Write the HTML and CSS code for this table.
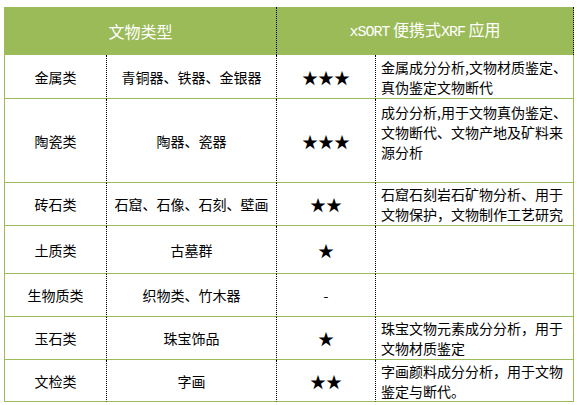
FILE: index.html
```html
<!DOCTYPE html>
<html lang="zh-CN">
<head>
<meta charset="utf-8">
<title>文物类型与 xSORT 便携式 XRF 应用</title>
<link rel="stylesheet" href="styles.css">
</head>
<body>
<div class="grid">
  <div class="hd hd-a"><span>文物类型</span></div>
  <div class="hd hd-b"><span><span class="lat">xSORT</span> 便携式<span class="lat">XRF</span> 应用</span></div>

  <div class="c c1 r1">金属类</div>
  <div class="c c2 r1">青铜器、铁器、金银器</div>
  <div class="c c3 r1 stars">★★★</div>
  <div class="c c4 r1 desc"><span>金属成分分析,文物材质鉴定、<br>真伪鉴定文物断代</span></div>

  <div class="c c1 r2">陶瓷类</div>
  <div class="c c2 r2">陶器、瓷器</div>
  <div class="c c3 r2 stars">★★★</div>
  <div class="c c4 r2 desc top"><span>成分分析,用于文物真伪鉴定、<br>文物断代、文物产地及矿料来<br>源分析</span></div>

  <div class="c c1 r3">砖石类</div>
  <div class="c c2 r3">石窟、石像、石刻、壁画</div>
  <div class="c c3 r3 stars">★★</div>
  <div class="c c4 r3 desc"><span>石窟石刻岩石矿物分析、用于<br>文物保护，文物制作工艺研究</span></div>

  <div class="c c1 r4">土质类</div>
  <div class="c c2 r4">古墓群</div>
  <div class="c c3 r4 stars">★</div>
  <div class="c c4 r4 desc"></div>

  <div class="c c1 r5">生物质类</div>
  <div class="c c2 r5">织物类、竹木器</div>
  <div class="c c3 r5 dash">-</div>
  <div class="c c4 r5 desc"></div>

  <div class="c c1 r6">玉石类</div>
  <div class="c c2 r6">珠宝饰品</div>
  <div class="c c3 r6 stars">★</div>
  <div class="c c4 r6 desc"><span>珠宝文物元素成分分析，用于<br>文物材质鉴定</span></div>

  <div class="c c1 r7">文检类</div>
  <div class="c c2 r7">字画</div>
  <div class="c c3 r7 stars">★★</div>
  <div class="c c4 r7 desc"><span>字画颜料成分分析，用于文物<br>鉴定与断代。</span></div>
</div>
</body>
</html>
```

FILE: styles.css
```css
* { box-sizing: border-box; }

html, body {
  margin: 0;
  padding: 0;
  background: #ffffff;
}

body {
  font-family: "Noto Sans CJK SC", "Noto Sans", sans-serif;
  font-size: 14px;
  color: #000000;
}

.grid {
  display: grid;
  grid-template-columns: 102px 170px 99px 198px;
  grid-template-rows: 48px 44px 84px 43px 48px 43px 43px 42px;
  width: 570px;
  margin: 7px 0 0 4px;
  border-left: 1px solid #9bbb59;
}

.hd {
  background: #9bbb59;
  color: #ffffff;
  font-size: 16px;
  line-height: 20px;
  display: flex;
  align-items: center;
  justify-content: center;
  border-right: 1px dotted #000000;
  white-space: pre;
}

.hd-a { grid-column: 1 / 3; }
.hd-b { grid-column: 3 / 5; }

.lat {
  font-family: "Liberation Mono", monospace;
  font-size: 15px;
  letter-spacing: -1px;
}

.c {
  display: flex;
  align-items: center;
  justify-content: center;
  line-height: 20px;
  border-right: 1px dotted #000000;
  border-bottom: 1px solid #9bbb59;
  white-space: nowrap;
}

.c4 {
  border-right: 1px solid #9bbb59;
}

.desc {
  justify-content: flex-start;
  padding-left: 5px;
}

.desc.top {
  align-items: flex-start;
  padding-top: 3px;
}

.stars {
  font-size: 16px;
}

.dash {
  font-size: 14px;
}
```
